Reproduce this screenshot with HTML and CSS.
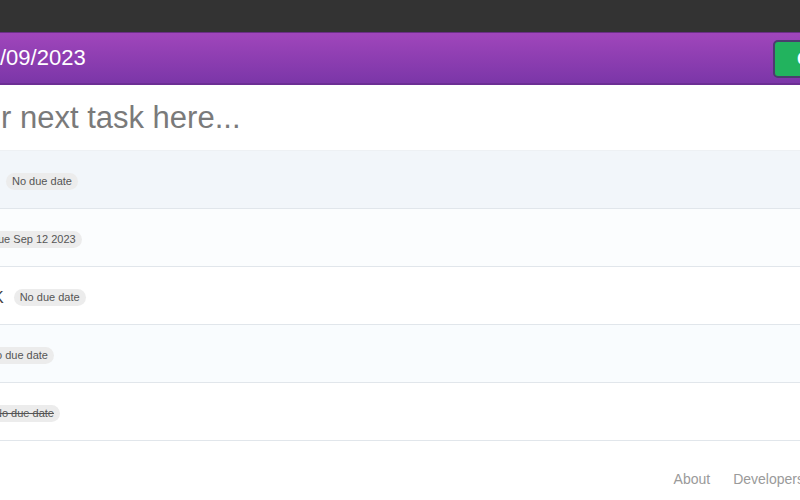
FILE: index.html
```html
<!DOCTYPE html>
<html>
<head>
<meta charset="utf-8">
<link rel="stylesheet" href="styles.css">
</head>
<body>
<div class="topbar"></div>
<header class="header">
  <div class="date">/09/2023</div>
  <button class="btn">C</button>
</header>
<div class="new-task">
  <input class="task-input" type="text" placeholder="r next task here...">
</div>
<ul class="tasks">
  <li class="task tint-a row-1"><span class="badge">No due date</span></li>
  <li class="task tint-b row-2"><span class="badge">ue Sep 12 2023</span></li>
  <li class="task row-3"><span class="title">K</span><span class="badge">No due date</span></li>
  <li class="task tint-c row-4"><span class="badge">o due date</span></li>
  <li class="task done row-5"><span class="badge">No due date</span></li>
</ul>
<footer class="footer">
  <a class="link">About</a>
  <a class="link">Developers</a>
</footer>
</body>
</html>
```

FILE: styles.css
```css
* { box-sizing: border-box; }
html, body {
  margin: 0;
  padding: 0;
  width: 800px;
  height: 500px;
  overflow: hidden;
  background: #fff;
  font-family: "Liberation Sans", Arial, sans-serif;
}
.topbar {
  height: 32px;
  background: #333333;
}
.header {
  height: 53px;
  display: flex;
  align-items: center;
  justify-content: space-between;
  background: linear-gradient(#a046bb, #7b36a8);
  border-top: 1px solid #6a2f86;
  border-bottom: 2px solid #6c2e94;
  overflow: hidden;
}
.date {
  color: #fff;
  font-size: 22px;
  white-space: nowrap;
}
.btn {
  width: 90px;
  height: 38px;
  margin-right: -63px;
  margin-top: 2px;
  border-radius: 5px;
  border: 2px solid #4b3d6e;
  background: #22b35e;
  color: #fff;
  font-family: inherit;
  font-size: 18px;
  font-weight: bold;
  text-align: left;
  padding: 0 0 0 22px;
}
.new-task {
  height: 66px;
  display: flex;
  align-items: center;
  overflow: hidden;
  border-bottom: 1px solid #eef1f4;
}
.task-input {
  border: 0;
  outline: 0;
  background: transparent;
  font-family: inherit;
  font-size: 31px;
  color: #7a7a7a;
  width: 600px;
  margin-left: 1px;
  padding: 0;
}
.task-input::placeholder { color: #7a7a7a; }
.tasks {
  list-style: none;
  margin: 0;
  padding: 0;
}
.task {
  height: 58px;
  display: flex;
  align-items: center;
  padding-top: 4px;
  border-bottom: 1px solid #e1e6eb;
  overflow: hidden;
  white-space: nowrap;
}
.tint-a { background: #f2f6fa; }
.tint-b { background: #fbfdfe; }
.tint-c { background: #f9fcfe; }
.title {
  font-size: 16px;
  color: #444;
  flex: none;
}
.badge {
  display: inline-block;
  font-size: 11px;
  color: #555;
  background: #ececec;
  border-radius: 9px;
  padding: 2px 6px;
  line-height: 13px;
}
.row-1 .badge { margin-left: 6px; }
.row-2 .badge { margin-left: -2px; padding-left: 0; border-radius: 0 9px 9px 0; }
.row-3 .title { margin-left: -7px; }
.row-3 .badge { margin-left: 10px; }
.row-4 .badge { margin-left: -4px; padding-left: 0; border-radius: 0 9px 9px 0; }
.row-5 .badge { margin-left: -12px; }
.done .badge { text-decoration: line-through; }
.footer {
  display: flex;
  justify-content: flex-end;
  gap: 23px;
  padding-top: 30px;
  margin-right: -4px;
}
.link {
  font-size: 14px;
  color: #9a9a9a;
}
```
